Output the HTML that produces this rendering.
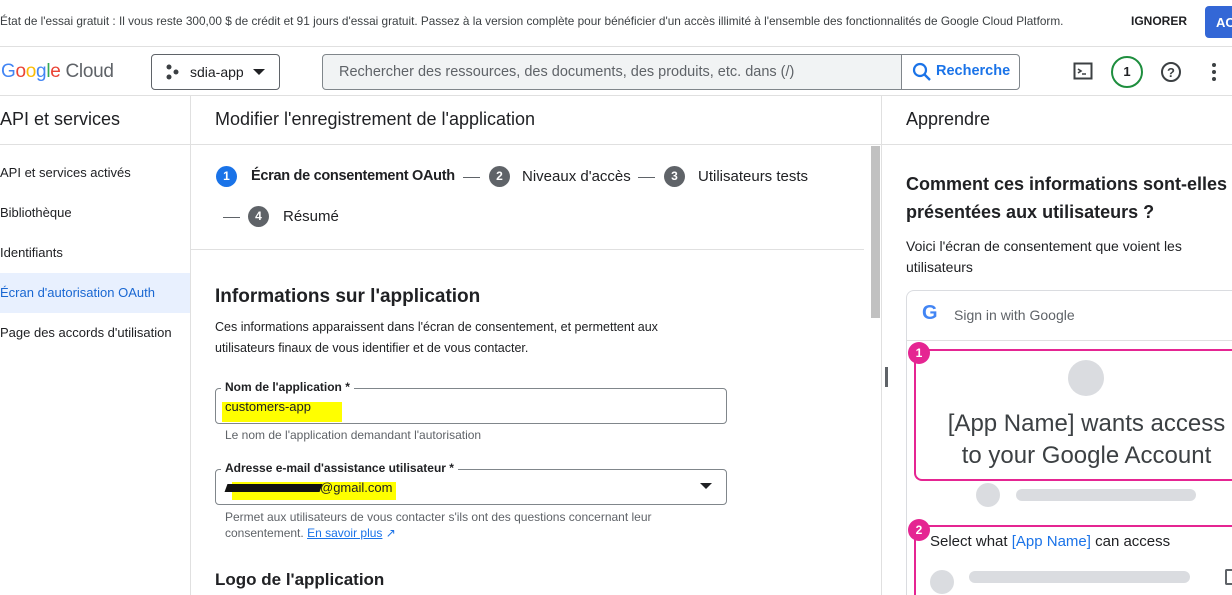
<!DOCTYPE html>
<html style="overflow:hidden;height:595px"><head><meta charset="utf-8"><style>
*{box-sizing:border-box;margin:0;padding:0}
body{width:1232px;height:595px;overflow:hidden;font-family:"Liberation Sans",sans-serif;color:#202124;background:#fff;position:relative}
.a{position:absolute}
.t{white-space:nowrap}
</style></head><body>
<div class="a t" style="left:0;top:14px;font-size:11.8px;color:#3c4043">État de l'essai gratuit : Il vous reste 300,00 $ de crédit et 91 jours d'essai gratuit. Passez à la version complète pour bénéficier d'un accès illimité à l'ensemble des fonctionnalités de Google Cloud Platform.</div>
<div class="a t" style="left:1131px;top:14px;font-size:12px;font-weight:bold">IGNORER</div>
<div class="a" style="left:1205px;top:6px;width:27px;height:32px;background:#3367d6;border-radius:4px 0 0 4px;color:#fff;font-size:13px;font-weight:bold;padding:9px 0 0 11px;overflow:hidden;white-space:nowrap">AC</div>
<div class="a" style="left:0;top:46px;width:1232px;height:1px;background:#e0e0e0"></div>
<div class="a t" style="left:1px;top:61px;font-size:19px;color:#5f6368;letter-spacing:-0.3px"><span style="color:#4285f4">G</span><span style="color:#ea4335">o</span><span style="color:#fbbc05">o</span><span style="color:#4285f4">g</span><span style="color:#34a853">l</span><span style="color:#ea4335">e</span> Cloud</div>
<div class="a" style="left:151px;top:54px;width:129px;height:36px;border:1px solid #5f6368;border-radius:4px"></div>
<svg class="a" style="left:165px;top:64px" width="14" height="16"><circle cx="4" cy="3" r="2.5" fill="#3c4043"/><circle cx="11" cy="8" r="2.5" fill="#3c4043"/><circle cx="4" cy="13" r="2.5" fill="#3c4043"/></svg>
<div class="a t" style="left:190px;top:64px;font-size:14px">sdia-app</div>
<svg class="a" style="left:252px;top:68px" width="14" height="8"><path d="M1 1h12L7 7z" fill="#202124"/></svg>
<div class="a" style="left:322px;top:54px;width:698px;height:36px;border:1px solid #80868b;border-radius:4px;background:#f1f3f4"></div>
<div class="a" style="left:901px;top:55px;width:118px;height:34px;background:#fff;border-left:1px solid #80868b;border-radius:0 4px 4px 0"></div>
<div class="a t" style="left:339px;top:64px;font-size:14.5px;color:#5f6368">Rechercher des ressources, des documents, des produits, etc. dans (/)</div>
<svg class="a" style="left:912px;top:62px" width="20" height="20"><circle cx="8" cy="8" r="6" fill="none" stroke="#1a73e8" stroke-width="2.2"/><path d="M12.5 12.5L18 18" stroke="#1a73e8" stroke-width="2.4"/></svg>
<div class="a t" style="left:936px;top:63px;font-size:14.5px;color:#1a73e8;font-weight:bold">Recherche</div>
<svg class="a" style="left:1073px;top:61px" width="20" height="20"><rect x="1.5" y="2.5" width="17" height="15" fill="none" stroke="#3c4043" stroke-width="2"/><path d="M5 8l3 2-3 2M9 13h4" stroke="#3c4043" stroke-width="1.6" fill="none"/></svg>
<div class="a" style="left:1111px;top:56px;width:32px;height:32px;border:2px solid #1e8e3e;border-radius:50%;text-align:center;font-size:13px;font-weight:bold;line-height:28px">1</div>
<svg class="a" style="left:1160px;top:61px" width="22" height="22"><circle cx="11" cy="11" r="9" fill="none" stroke="#3c4043" stroke-width="2"/><text x="11" y="16" text-anchor="middle" font-size="13" font-weight="bold" fill="#3c4043" font-family="Liberation Sans">?</text></svg>
<svg class="a" style="left:1210px;top:62px" width="8" height="20"><circle cx="4" cy="3" r="2" fill="#3c4043"/><circle cx="4" cy="10" r="2" fill="#3c4043"/><circle cx="4" cy="17" r="2" fill="#3c4043"/></svg>
<div class="a" style="left:0;top:95px;width:1232px;height:1px;background:#e0e0e0"></div>
<div class="a" style="left:190px;top:96px;width:1px;height:499px;background:#e0e0e0"></div>
<div class="a" style="left:881px;top:96px;width:1px;height:499px;background:#e0e0e0"></div>
<div class="a" style="left:0;top:144px;width:1232px;height:1px;background:#e0e0e0"></div>
<div class="a t" style="left:0;top:109px;font-size:18px">API et services</div>
<div class="a t" style="left:215px;top:109px;font-size:18px">Modifier l'enregistrement de l'application</div>
<div class="a t" style="left:906px;top:109px;font-size:18px">Apprendre</div>
<div class="a t" style="left:0;top:165px;font-size:13px">API et services activés</div>
<div class="a t" style="left:0;top:205px;font-size:13px">Bibliothèque</div>
<div class="a t" style="left:0;top:245px;font-size:13px">Identifiants</div>
<div class="a" style="left:0;top:273px;width:190px;height:40px;background:#e8f0fe"></div>
<div class="a t" style="left:0;top:285px;font-size:13px;color:#1967d2">Écran d'autorisation OAuth</div>
<div class="a t" style="left:0;top:325px;font-size:13px">Page des accords d'utilisation</div>
<div class="a" style="left:216px;top:166px;width:21px;height:21px;border-radius:50%;background:#1a73e8;color:#fff;font-size:12px;font-weight:bold;text-align:center;line-height:21px">1</div>
<div class="a t" style="left:251px;top:168px;font-size:14.5px;font-weight:bold;letter-spacing:-0.3px">Écran de consentement OAuth</div>
<div class="a" style="left:463px;top:177px;width:17px;height:1px;background:#5f6368"></div>
<div class="a" style="left:489px;top:166px;width:21px;height:21px;border-radius:50%;background:#5f6368;color:#fff;font-size:12px;font-weight:bold;text-align:center;line-height:21px">2</div>
<div class="a t" style="left:522px;top:168px;font-size:15px">Niveaux d'accès</div>
<div class="a" style="left:638px;top:177px;width:17px;height:1px;background:#5f6368"></div>
<div class="a" style="left:664px;top:166px;width:21px;height:21px;border-radius:50%;background:#5f6368;color:#fff;font-size:12px;font-weight:bold;text-align:center;line-height:21px">3</div>
<div class="a t" style="left:698px;top:168px;font-size:15px">Utilisateurs tests</div>
<div class="a" style="left:223px;top:217px;width:17px;height:1px;background:#5f6368"></div>
<div class="a" style="left:248px;top:206px;width:21px;height:21px;border-radius:50%;background:#5f6368;color:#fff;font-size:12px;font-weight:bold;text-align:center;line-height:21px">4</div>
<div class="a t" style="left:283px;top:208px;font-size:15px">Résumé</div>
<div class="a" style="left:191px;top:249px;width:673px;height:1px;background:#e0e0e0"></div>
<div class="a" style="left:871px;top:146px;width:9px;height:172px;background:#c1c1c1"></div>
<div class="a t" style="left:215px;top:286px;font-size:19px;font-weight:bold;color:#202124">Informations sur l'application</div>
<div class="a" style="left:215px;top:317px;font-size:12.5px;line-height:21px;width:500px">Ces informations apparaissent dans l'écran de consentement, et permettent aux utilisateurs finaux de vous identifier et de vous contacter.</div>
<div class="a" style="left:215px;top:388px;width:512px;height:36px;border:1px solid #80868b;border-radius:4px"></div>
<div class="a t" style="left:221px;top:380px;font-size:12px;font-weight:bold;background:#fff;padding:0 4px">Nom de l'application *</div>
<div class="a" style="left:222px;top:402px;width:120px;height:20px;background:#ffff00"></div>
<div class="a t" style="left:225px;top:399px;font-size:13px">customers-app</div>
<div class="a t" style="left:225px;top:428px;font-size:12px;color:#5f6368">Le nom de l'application demandant l'autorisation</div>
<div class="a" style="left:215px;top:469px;width:512px;height:36px;border:1px solid #80868b;border-radius:4px"></div>
<div class="a t" style="left:221px;top:461px;font-size:12px;font-weight:bold;background:#fff;padding:0 4px">Adresse e-mail d'assistance utilisateur *</div>
<div class="a" style="left:232px;top:482px;width:164px;height:18px;background:#ffff00"></div>
<div class="a" style="left:226px;top:484px;width:95px;height:8px;background:#111;transform:skewX(-20deg)"></div>
<div class="a t" style="left:320px;top:480px;font-size:13px">@gmail.com</div>
<svg class="a" style="left:700px;top:483px" width="12" height="7"><path d="M0 0h12L6 6z" fill="#202124"/></svg>
<div class="a" style="left:225px;top:509px;font-size:12px;color:#5f6368;line-height:16px;width:460px">Permet aux utilisateurs de vous contacter s'ils ont des questions concernant leur consentement. <span style="color:#1a73e8;text-decoration:underline">En savoir plus</span> <span style="color:#1a73e8">↗</span></div>
<div class="a t" style="left:215px;top:570px;font-size:17px;font-weight:bold">Logo de l'application</div>
<div class="a" style="left:885px;top:367px;width:3px;height:20px;background:#5f6368"></div>
<div class="a t" style="left:906px;top:170px;font-size:18px;font-weight:bold;line-height:28px">Comment ces informations sont-elles<br>présentées aux utilisateurs ?</div>
<div class="a" style="left:906px;top:236px;font-size:14px;line-height:21px">Voici l'écran de consentement que voient les<br>utilisateurs</div>
<div class="a" style="left:906px;top:290px;width:326px;height:305px;border:1px solid #dadce0;border-right:none;border-bottom:none;border-radius:8px 0 0 0"></div>
<div class="a" style="left:907px;top:340px;width:325px;height:1px;background:#e0e0e0"></div>
<div class="a t" style="left:922px;top:302px;font-size:20px;font-weight:bold;color:#4285f4">G</div>
<div class="a t" style="left:954px;top:307px;font-size:14px;color:#5f6368">Sign in with Google</div>
<div class="a" style="left:914px;top:349px;width:318px;height:132px;border:2px solid #e52592;border-right:none;border-radius:8px 0 0 8px"></div>
<div class="a" style="left:908px;top:342px;width:22px;height:22px;border-radius:50%;background:#e52592;color:#fff;font-size:12px;font-weight:bold;text-align:center;line-height:22px">1</div>
<div class="a" style="left:1068px;top:360px;width:36px;height:36px;border-radius:50%;background:#dadce0"></div>
<div class="a t" style="left:944px;top:408px;font-size:24px;line-height:32px;text-align:center;width:285px;color:#3c4043">[App Name] wants access<br>to your Google Account</div>
<div class="a" style="left:976px;top:483px;width:24px;height:24px;border-radius:50%;background:#dadce0"></div>
<div class="a" style="left:1016px;top:489px;width:180px;height:12px;border-radius:6px;background:#dadce0"></div>
<div class="a" style="left:914px;top:525px;width:318px;height:70px;border-top:2px solid #e52592;border-left:2px solid #e52592;border-radius:8px 0 0 0"></div>
<div class="a" style="left:908px;top:519px;width:22px;height:22px;border-radius:50%;background:#e52592;color:#fff;font-size:12px;font-weight:bold;text-align:center;line-height:22px">2</div>
<div class="a t" style="left:930px;top:533px;font-size:15px;color:#202124">Select what <span style="color:#1a73e8">[App Name]</span> can access</div>
<div class="a" style="left:930px;top:570px;width:24px;height:24px;border-radius:50%;background:#dadce0"></div>
<div class="a" style="left:969px;top:571px;width:221px;height:12px;border-radius:6px;background:#dadce0"></div>
<div class="a" style="left:1225px;top:569px;width:7px;height:16px;border:2px solid #5f6368;border-right:none;border-radius:2px 0 0 2px"></div>
</body></html>
